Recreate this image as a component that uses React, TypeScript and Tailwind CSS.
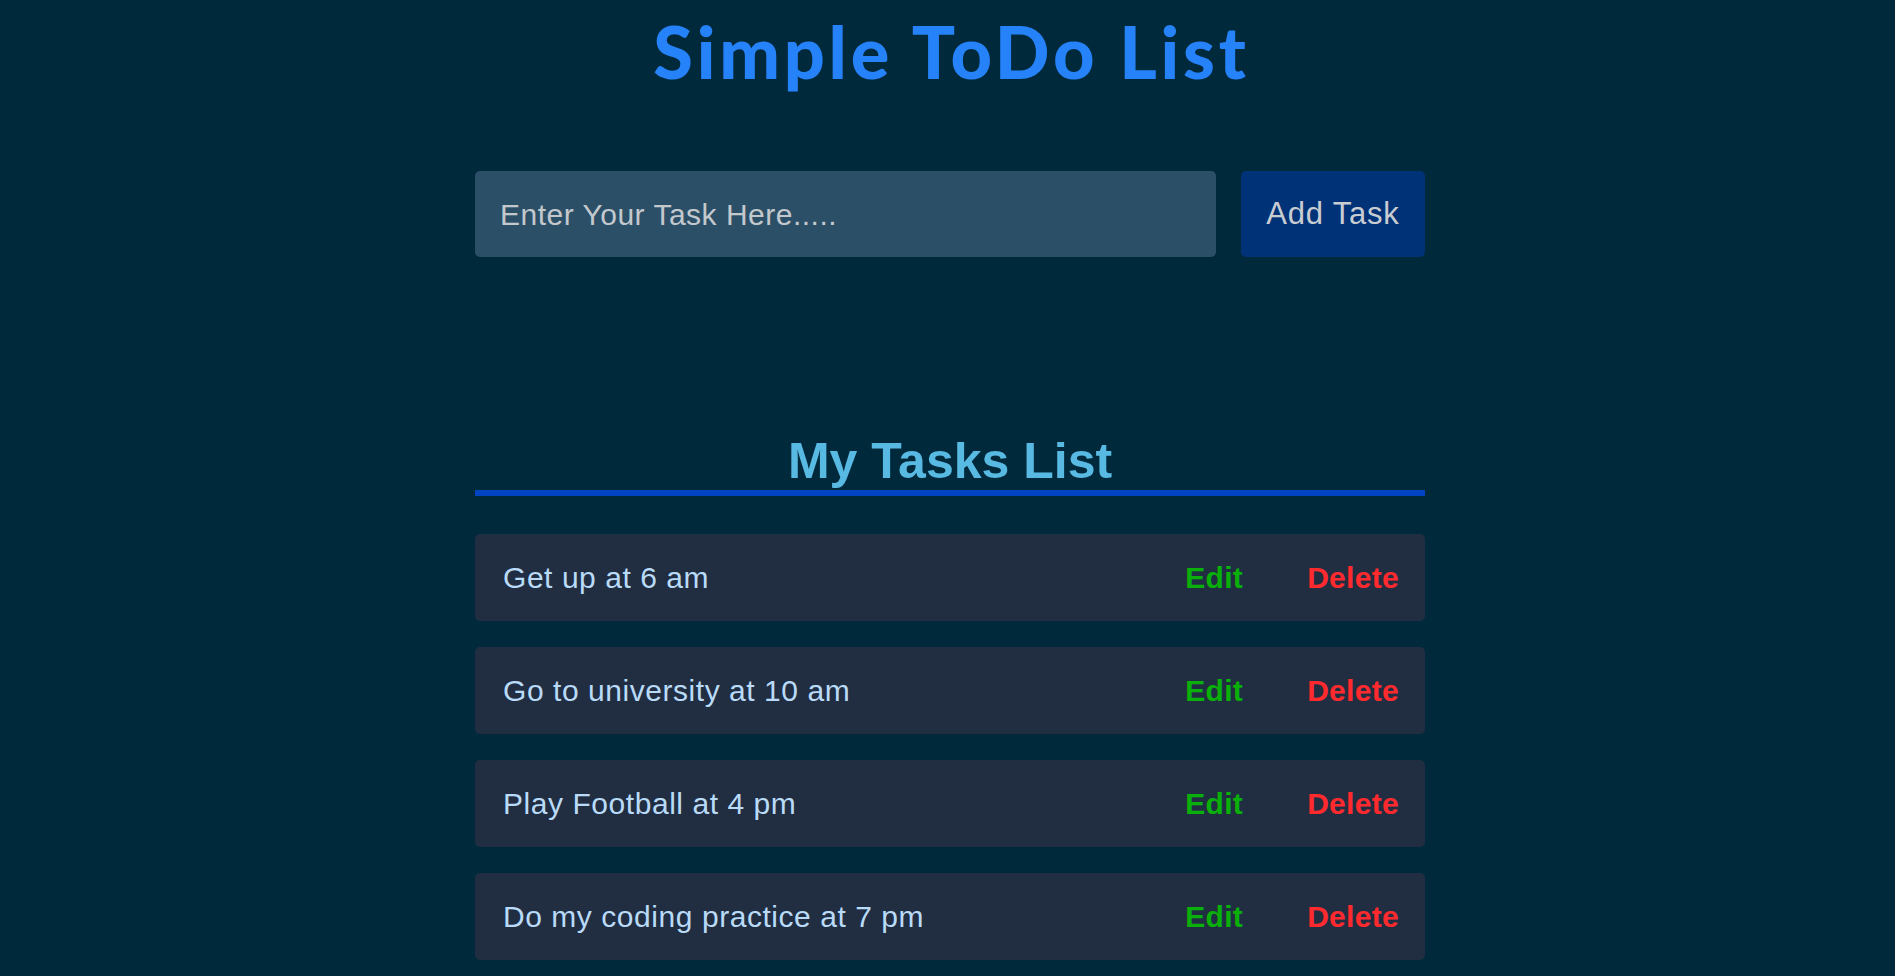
import { useState } from "react";

const initialTasks = [
  "Get up at 6 am",
  "Go to university at 10 am",
  "Play Football at 4 pm",
  "Do my coding practice at 7 pm",
];

export default function App() {
  const [tasks] = useState(initialTasks);
  const [text, setText] = useState("");

  return (
    <div className="min-h-screen bg-[#01293c] pl-[5px] font-['Liberation_Sans',Arial,sans-serif]">
      {/* Title */}
      <h1 className="pt-[15px] pl-[3px] text-center font-['Lato',sans-serif] text-[72px] font-black leading-[72px] tracking-[3.8px] text-[#2582f8]">
        Simple ToDo List
      </h1>

      <div className="mx-auto mt-[84px] w-[950px]">
        {/* Input row */}
        <div className="flex h-[86px] gap-[25px]">
          <input
            value={text}
            onChange={(e) => setText(e.target.value)}
            placeholder="Enter Your Task Here....."
            className="min-w-0 flex-1 rounded-[5px] bg-[#2c4f68] px-[25px] text-[30px] tracking-[0.5px] text-[#d0d4d8] outline-none placeholder:text-[#c3c8cd]"
          />
          <button className="w-[184px] rounded-[5px] bg-[#003278] text-[31px] tracking-[0.8px] text-[#c9cdd2]">
            Add Task
          </button>
        </div>

        {/* List heading */}
        <h2 className="mt-[179px] border-b-[6px] border-[#0243c1] pb-[4px] text-center text-[50px] font-bold leading-[50px] text-[#58b9e2]">
          My Tasks List
        </h2>

        {/* Tasks */}
        <ul className="mt-[38px] flex flex-col gap-[26px]">
          {tasks.map((t) => (
            <li
              key={t}
              className="flex h-[87px] items-center rounded-[5px] bg-[#212e42] pl-[28px] pr-[26px]"
            >
              <span className="flex-1 text-[30px] tracking-[0.55px] text-[#b9dbf8]">{t}</span>
              <button className="text-[30px] font-bold tracking-[0.3px] text-[#0ab00a]">Edit</button>
              <button className="ml-[64px] text-[30px] font-bold tracking-[0.3px] text-[#ff2a2e]">Delete</button>
            </li>
          ))}
        </ul>
      </div>
    </div>
  );
}
